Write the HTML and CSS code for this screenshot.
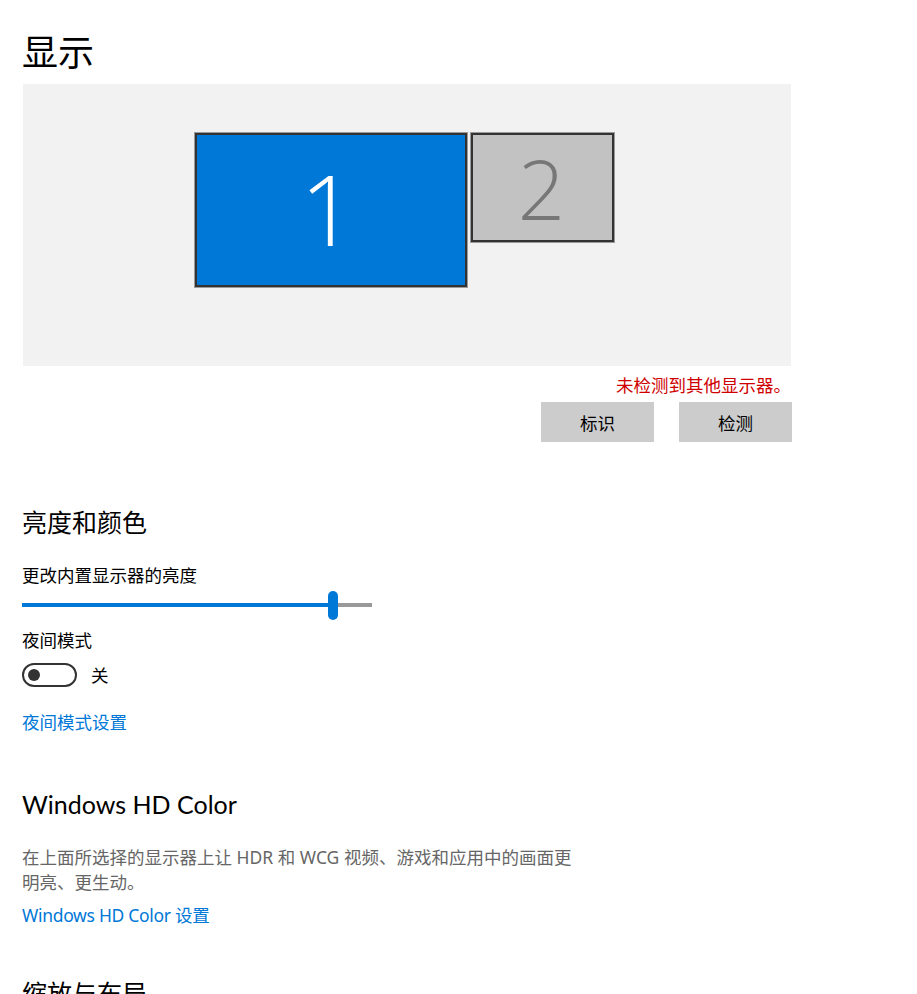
FILE: index.html
```html
<!DOCTYPE html>
<html lang="zh-CN">
<head>
    <meta charset="UTF-8">
    <meta name="viewport" content="width=device-width, initial-scale=1.0">
    <title>显示</title>
    <link rel="stylesheet" href="styles.css">
</head>
<body>
    <main class="page">
        <h1 class="title">显示</h1>

        <div class="arrange">
            <div class="monitor main">1</div>
            <div class="monitor other">2</div>
        </div>
        <p class="warn">未检测到其他显示器。</p>
        <div class="actions">
            <button class="btn">标识</button>
            <button class="btn">检测</button>
        </div>

        <h2 class="section">亮度和颜色</h2>
        <p class="label">更改内置显示器的亮度</p>
        <div class="slider">
            <span class="fill"></span>
            <span class="thumb"></span>
            <span class="rest"></span>
        </div>

        <p class="label night">夜间模式</p>
        <div class="switch-row">
            <span class="switch"><span class="knob"></span></span>
            <span class="state">关</span>
        </div>
        <a class="link night-link" href="#">夜间模式设置</a>

        <h2 class="section latin">Windows HD Color</h2>
        <p class="desc">在上面所选择的显示器上让 HDR 和 WCG 视频、游戏和应用中的画面更明亮、更生动。</p>
        <a class="link hd-link" href="#">Windows HD Color 设置</a>

        <h2 class="section scale">缩放与布局</h2>
    </main>
</body>
</html>
```

FILE: styles.css
```css
body {
    margin: 0;
    background: #fff;
    color: #000;
    font-family: "Noto Sans", "Noto Sans CJK SC", sans-serif;
    font-size: 17.5px;
    overflow: hidden;
}

.page { padding: 29px 0 0 22px; }

.title {
    margin: 0;
    font-size: 36px;
    font-weight: 400;
    line-height: 48px;
}

/* display arrangement panel */
.arrange {
    margin: 7px 0 0 1px;
    width: 768px;
    height: 282px;
    box-sizing: border-box;
    padding: 48px 5px 0 0;
    background: #f2f2f2;
    display: flex;
    justify-content: center;
    align-items: flex-start;
    gap: 2px;
}

.monitor {
    box-sizing: border-box;
    border: 1px solid #9a9a9a;
    box-shadow: inset 0 0 0 2px #333;
    display: flex;
    align-items: center;
    justify-content: center;
    font-family: "Open Sans", sans-serif;
    font-weight: 300;
}
.monitor.main {
    width: 274px;
    height: 156px;
    background: #0078d7;
    color: #fff;
    font-size: 98px;
    padding: 0 6px 4px 0;
}
.monitor.other {
    width: 145px;
    height: 111px;
    background: #c2c2c2;
    color: #777;
    font-size: 83px;
    padding-right: 2px;
}

.warn {
    margin: 7px 0 0;
    width: 769px;
    text-align: right;
    color: #d00000;
    line-height: 24px;
}

.actions {
    margin-top: 5px;
    width: 770px;
    display: flex;
    justify-content: flex-end;
    gap: 25px;
}
.btn {
    width: 113px;
    height: 40px;
    border: none;
    background: #ccc;
    font: inherit;
    color: #000;
    padding: 0;
}

.section {
    margin: 63px 0 0;
    font-size: 25px;
    font-weight: 400;
    line-height: 34px;
}

.label {
    margin: 24px 0 0;
    line-height: 24px;
}
.label.night { margin-top: 8px; }

.slider {
    margin-top: 3px;
    width: 350px;
    height: 30px;
    display: flex;
    align-items: center;
}
.slider .fill { width: 306px; height: 4px; background: #0078d7; }
.slider .thumb { width: 10px; height: 29px; border-radius: 5px; background: #0078d7; }
.slider .rest { flex: 1; height: 4px; background: #999; }

.switch-row {
    margin-top: 11px;
    display: flex;
    align-items: center;
    gap: 14px;
}
.switch {
    box-sizing: border-box;
    width: 55px;
    height: 24px;
    border: 2px solid #333;
    border-radius: 12px;
    display: flex;
    align-items: center;
    padding-left: 4px;
}
.knob {
    width: 12px;
    height: 12px;
    border-radius: 50%;
    background: #333;
}
.state { line-height: 24px; }

.link {
    display: block;
    color: #0078d7;
    text-decoration: none;
    line-height: 24px;
}
.night-link { margin-top: 23px; }

.section.latin {
    margin-top: 52px;
    font-family: Lato, "Noto Sans", sans-serif;
    font-size: 25px;
    line-height: 36px;
}

.desc {
    margin: 23px 0 0;
    width: 560px;
    color: #666;
    line-height: 25px;
}

.hd-link {
    margin-top: 8px;
    letter-spacing: -0.3px;
}

.section.scale { margin-top: 49px; }
```
